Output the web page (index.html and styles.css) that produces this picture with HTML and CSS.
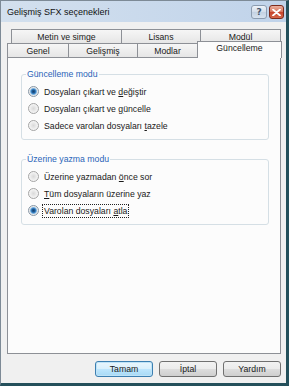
FILE: index.html
```html
<!DOCTYPE html>
<html lang="tr">
<head>
<meta charset="utf-8">
<title>Gelişmiş SFX seçenekleri</title>
<link rel="stylesheet" href="styles.css">
</head>
<body>
<div class="window">
  <div class="titlebar">
    <span class="title">Gelişmiş SFX seçenekleri</span>
    <div class="caption-buttons">
      <span class="cap-btn help">?</span>
      <span class="cap-btn close">
        <svg width="9" height="7" viewBox="0 0 9 7"><path d="M1 0.5 L8 6.5 M8 0.5 L1 6.5" stroke="#fff" stroke-width="1.8" stroke-linecap="round"/></svg>
      </span>
    </div>
  </div>
  <div class="body">
    <div class="tabrow back">
      <div class="tab first t-metin">Metin ve simge</div>
      <div class="tab t-lisans">Lisans</div>
      <div class="tab t-modul">Modül</div>
    </div>
    <div class="tabrow front">
      <div class="tab first t-genel">Genel</div>
      <div class="tab t-gelismis">Gelişmiş</div>
      <div class="tab t-modlar">Modlar</div>
      <div class="tab selected t-guncelleme">Güncelleme</div>
    </div>
    <div class="panel">
      <div class="group g1">
        <div class="group-label">Güncelleme modu</div>
        <div class="options">
          <div class="option"><span class="radio on"></span><span class="label">Dosyaları çıkart ve <u>d</u>eğiştir</span></div>
          <div class="option"><span class="radio"></span><span class="label">Dosyaları çıkart ve <u>g</u>üncelle</span></div>
          <div class="option"><span class="radio"></span><span class="label">Sadece varolan dosyaları <u>t</u>azele</span></div>
        </div>
      </div>
      <div class="group g2">
        <div class="group-label">Üzerine yazma modu</div>
        <div class="options">
          <div class="option"><span class="radio"></span><span class="label">Üzerine yazmadan <u>ö</u>nce sor</span></div>
          <div class="option"><span class="radio"></span><span class="label"><u>T</u>üm dosyaların üzerine yaz</span></div>
          <div class="option"><span class="radio on"></span><span class="label focus">Varolan dosyaları <u>a</u>tla</span></div>
        </div>
      </div>
    </div>
    <div class="buttons">
      <span class="btn default">Tamam</span>
      <span class="btn">İptal</span>
      <span class="btn">Yardım</span>
    </div>
  </div>
</div>
</body>
</html>
```
FILE: styles.css
```css
html, body {
  margin: 0;
  padding: 0;
  background: #f0f0f0;
}

.window {
  width: 289px;
  height: 386px;
  box-sizing: border-box;
  border: 1px solid #7d8a96;
  border-right: 3px solid #24505b;
  border-bottom: 3px solid #24505b;
  background: #f0f0f0;
  display: flex;
  flex-direction: column;
  font-family: "Liberation Sans", Arial, sans-serif;
  font-size: 8.7px;
  color: #1a1a1a;
  overflow: hidden;
}

.titlebar {
  height: 21px;
  flex: none;
  display: flex;
  align-items: center;
  padding: 0 2px 0 6px;
  background: linear-gradient(to right, #d3e0ee, #c0d3ea);
}

.title {
  font-size: 9px;
  color: #111;
  padding-top: 1px;
}

.caption-buttons {
  margin-left: auto;
  display: flex;
  gap: 2px;
  padding-top: 1px;
}

.cap-btn {
  width: 16px;
  height: 14px;
  box-sizing: border-box;
  border-radius: 3px;
  display: flex;
  align-items: center;
  justify-content: center;
}

.help {
  border: 1px solid #8c9cb0;
  background: linear-gradient(#eef3f9, #d2dcea 50%, #c3d1e3 51%, #d7e2ef);
  color: #44556a;
  font-family: "DejaVu Sans", sans-serif;
  font-weight: bold;
  font-size: 9px;
  line-height: 1;
}

.close {
  width: 15px;
  border: 1px solid #7c2a1c;
  background: linear-gradient(#eab0a0, #d7735a 50%, #c6412a 51%, #d5694c);
}

.body {
  flex: 1;
  display: flex;
  flex-direction: column;
  padding: 7px 5px 0 6px;
}

.tabrow {
  display: flex;
  height: 14px;
  flex: none;
}

.tabrow.back {
  padding-left: 4px;
}

.tabrow.front {
  align-items: flex-end;
}

.tab {
  box-sizing: border-box;
  height: 14px;
  border-top: 1px solid #8d9096;
  border-right: 1px solid #8d9096;
  background: linear-gradient(#f6f6f6, #e6e6e6);
  display: flex;
  align-items: center;
  justify-content: center;
  padding-top: 1px;
  white-space: nowrap;
}

.tab.first {
  border-left: 1px solid #8d9096;
}

.t-metin { width: 111px; }
.t-lisans { width: 79px; }
.t-modul { width: 80px; }

.t-genel { width: 62px; }
.t-gelismis { width: 69px; }
.t-modlar { width: 60px; }

.tab.selected {
  width: 85px;
  height: 17px;
  margin-left: -1px;
  margin-right: -2px;
  margin-bottom: -1px;
  border-left: 1px solid #8d9096;
  background: #fcfcfc;
  position: relative;
  z-index: 1;
  align-items: flex-start;
  padding-top: 1px;
}

.panel {
  flex: none;
  height: 297px;
  box-sizing: border-box;
  border: 1px solid #8d9096;
  background: #fcfcfc;
  padding-top: 16px;
}

.group {
  margin: 0 11px 0 13px;
  border: 1px solid #d5dfe5;
  border-radius: 3px;
  padding-bottom: 5px;
}

.group.g2 {
  margin-top: 19px;
}

.group-label {
  width: fit-content;
  margin: -6px 0 0 4px;
  padding: 0 1px;
  line-height: 11px;
  background: #fcfcfc;
  color: #2a64b8;
}

.options {
  padding-top: 3px;
}

.option {
  height: 17px;
  display: flex;
  align-items: center;
  padding-left: 6px;
}

.radio {
  width: 11px;
  height: 11px;
  box-sizing: border-box;
  border-radius: 50%;
  border: 1px solid #a4a4a4;
  background: radial-gradient(circle, #d9d9d9 0, #ececec 3px, #fafafa 5px);
  margin-right: 3px;
  flex: none;
}

.radio.on {
  border-color: #8797a6;
  background: radial-gradient(circle, #16406e 0, #1f5c97 1.5px, #4d95d4 2.6px, #a9cfee 3.4px, #e4e4e4 3.8px, #f8f8f8 5px);
}

.label {
  white-space: nowrap;
  padding: 1px 1px;
  border: 1px solid transparent;
}

.label u {
  text-decoration-thickness: 1px;
  text-underline-offset: 1px;
}

.label.focus {
  border: 1px dotted #222;
}

.buttons {
  display: flex;
  justify-content: flex-end;
  gap: 6px;
  margin-top: 7px;
}

.btn {
  width: 58px;
  height: 16px;
  box-sizing: border-box;
  border: 1px solid #707070;
  border-radius: 3px;
  background: linear-gradient(#f2f2f2, #ebebeb 50%, #dddddd 51%, #cfcfcf);
  display: flex;
  align-items: center;
  justify-content: center;
}

.btn.default {
  border-color: #3c7fb1;
  background: linear-gradient(#eaf6fd, #d9f0fc 50%, #bee6fd 51%, #a7d9f5);
  box-shadow: inset 0 0 0 1px #bfe3f7;
}
```
